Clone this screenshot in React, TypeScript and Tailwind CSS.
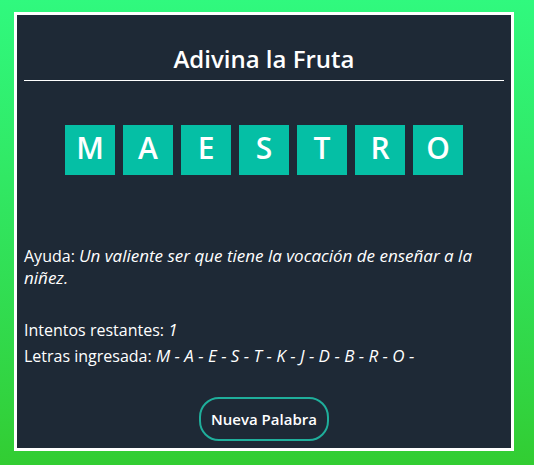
const letters = ["M", "A", "E", "S", "T", "R", "O"];
const used = ["M", "A", "E", "S", "T", "K", "J", "D", "B", "R", "O"];

export default function App() {
  return (
    <div className="flex min-h-screen flex-col bg-linear-to-b from-[#30f97e] to-[#32cd32] px-[14px] pt-3 pb-[14px] font-['Open_Sans',sans-serif] text-white">
      <main className="mr-[6px] flex flex-1 flex-col border-3 border-white bg-[#1e2936] px-[7px] pt-7">
        <h1 className="border-b border-white pb-[5px] text-center text-2xl font-semibold">
          Adivina la Fruta
        </h1>
        <div className="mt-11 flex justify-center gap-2">
          {letters.map((letter, i) => (
            <span
              key={i}
              className="flex size-[50px] items-center justify-center bg-[#05bfa5] pb-1 text-3xl font-semibold"
            >
              {letter}
            </span>
          ))}
        </div>
        <p className="mt-[70px] text-base leading-[22px]">
          Ayuda:{" "}
          <em className="text-[17px]">
            Un valiente ser que tiene la vocación de enseñar a la niñez.
          </em>
        </p>
        <p className="mt-[30px] text-base leading-[22px]">
          Intentos restantes: <em className="text-[17px]">1</em>
        </p>
        <p className="mt-1 text-base leading-[22px]">
          Letras ingresada:{" "}
          <em className="text-[17px]">
            {used.map((letter) => letter + " - ").join("")}
          </em>
        </p>
        <button
          type="button"
          className="mt-[30px] h-11 self-center rounded-[20px] border-2 border-[#1fae9b] px-[10px] text-[15px] font-semibold"
        >
          Nueva Palabra
        </button>
      </main>
    </div>
  );
}
